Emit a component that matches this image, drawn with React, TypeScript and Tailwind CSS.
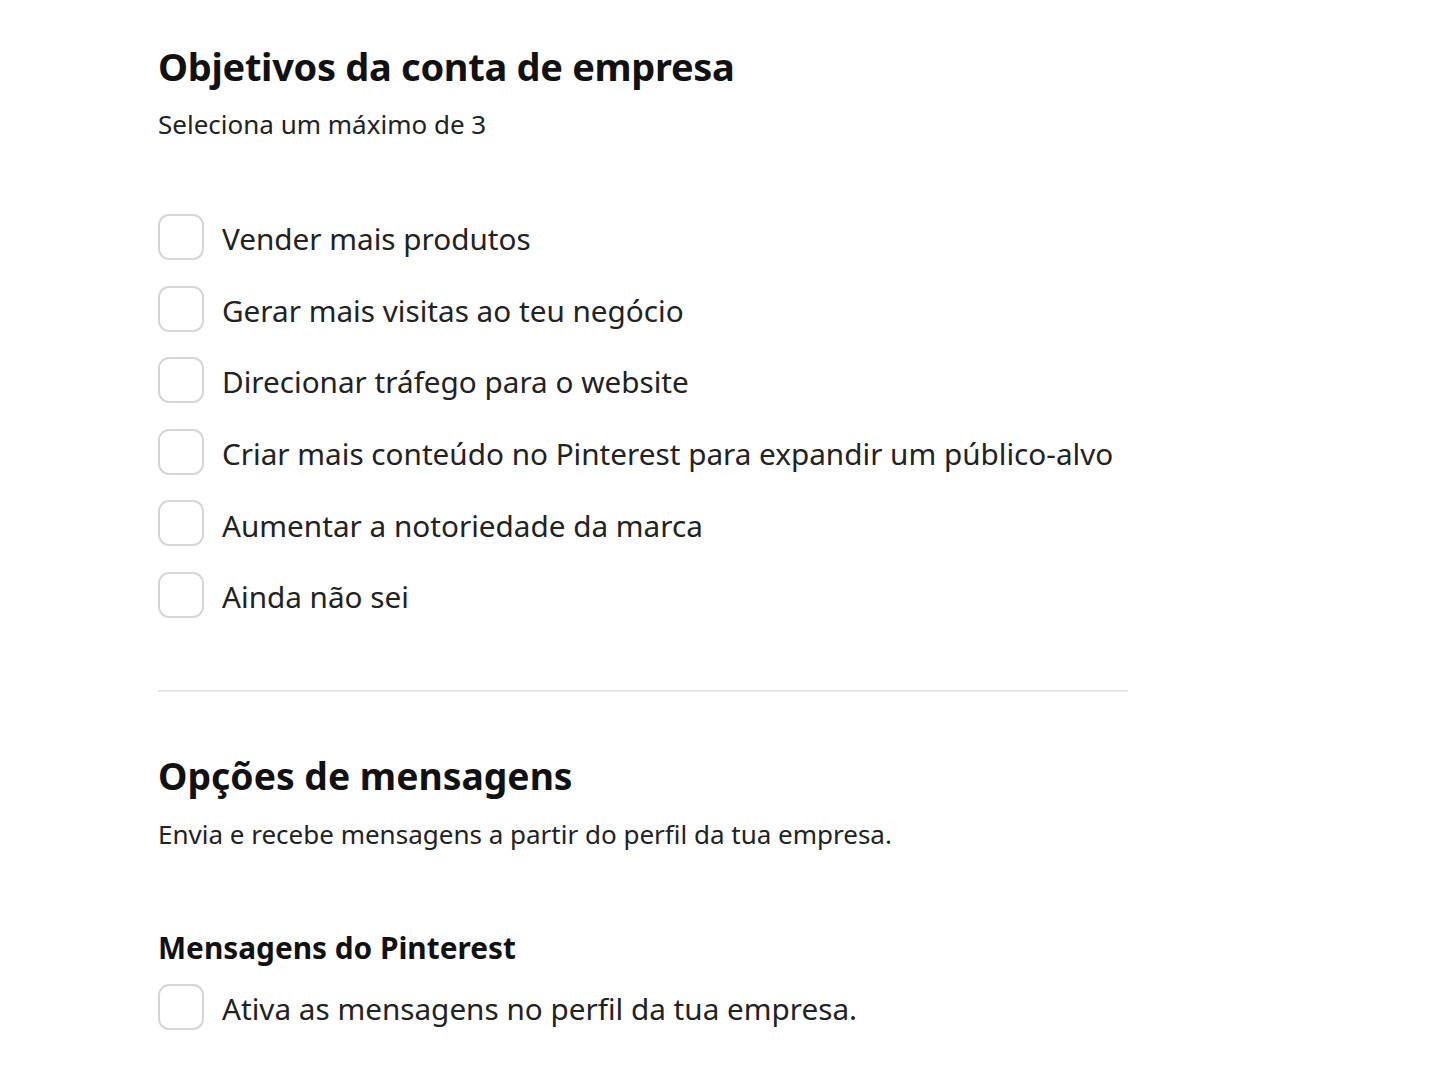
import React from "react";

const goals = [
  "Vender mais produtos",
  "Gerar mais visitas ao teu negócio",
  "Direcionar tráfego para o website",
  "Criar mais conteúdo no Pinterest para expandir um público-alvo",
  "Aumentar a notoriedade da marca",
  "Ainda não sei",
];

function Box() {
  return <div className="w-[46px] h-[46px] rounded-[11px] border-2 border-[#d6d6d6] bg-white shrink-0" />;
}

function Row({ label }: { label: string }) {
  return (
    <div className="flex items-center gap-[18px] h-[46px]">
      <Box />
      <span className="text-[29.7px] text-[#222] leading-none whitespace-nowrap pt-[4px]">{label}</span>
    </div>
  );
}

export default function App() {
  return (
    <div className="min-h-[1075px] bg-white pl-[158px] pt-[42px] text-[#111]" style={{ fontFamily: '"Noto Sans", sans-serif' }}>
      <div className="w-[970px]">
        <h1 className="text-[38px] font-bold leading-[48px] tracking-[-0.3px]">Objetivos da conta de empresa</h1>
        <p className="mt-[18px] text-[26px] leading-[32px] text-[#222]">Seleciona um máximo de 3</p>
        <div className="mt-[74px] flex flex-col gap-[25.6px]">
          {goals.map((g) => (
            <Row key={g} label={g} />
          ))}
        </div>
        <div className="mt-[72px] h-[2px] bg-[#e6e6e6]" />
        <h2 className="mt-[60px] text-[37.3px] font-bold leading-[48px]">Opções de mensagens</h2>
        <p className="mt-[18px] text-[26px] leading-[32px] text-[#222]">Envia e recebe mensagens a partir do perfil da tua empresa.</p>
        <h3 className="mt-[80px] text-[29.8px] font-bold leading-[36px]">Mensagens do Pinterest</h3>
        <div className="mt-[18px]">
          <Row label="Ativa as mensagens no perfil da tua empresa." />
        </div>
      </div>
    </div>
  );
}
